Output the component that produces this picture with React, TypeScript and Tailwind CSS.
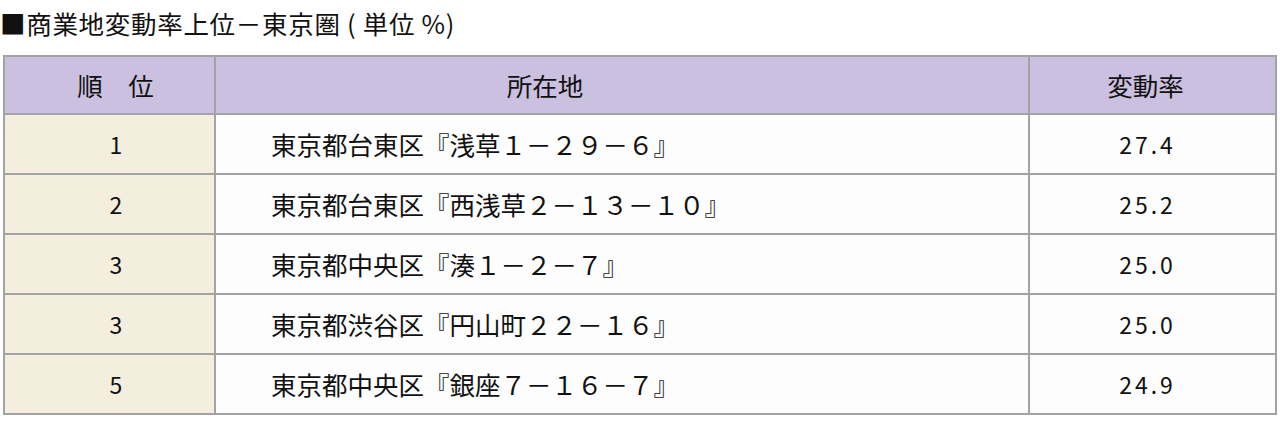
const ROWS = [
  { rank: '1', addr: '東京都台東区『浅草１－２９－６』', rate: '27.4' },
  { rank: '2', addr: '東京都台東区『西浅草２－１３－１０』', rate: '25.2' },
  { rank: '3', addr: '東京都中央区『湊１－２－７』', rate: '25.0' },
  { rank: '3', addr: '東京都渋谷区『円山町２２－１６』', rate: '25.0' },
  { rank: '5', addr: '東京都中央区『銀座７－１６－７』', rate: '24.9' },
];

export default function App() {
  return (
    <div className="w-[1280px] h-[422px] bg-white text-[#111] font-['Noto_Sans_CJK_JP','Noto_Sans',sans-serif]">
      <h1 className="pt-[7px] text-[25.5px] leading-[32px] font-normal tracking-[0.7px]">■商業地変動率上位－東京圏 ( 単位 %)</h1>
      <table className="mt-[16px] ml-[3px] w-[1274px] border-collapse border-2 border-[#a3a3a3] text-[25.5px] table-fixed">
        <colgroup>
          <col className="w-[211px]" />
          <col className="w-[814px]" />
          <col />
        </colgroup>
        <thead>
          <tr className="h-[58px] bg-[#cbc0df]">
            <th className="border-2 border-[#a3a3a3] font-normal text-center pl-[12px]">順　位</th>
            <th className="border-2 border-[#a3a3a3] font-normal text-center pr-[154px]">所在地</th>
            <th className="border-2 border-[#a3a3a3] font-normal text-center pr-[14px]">変動率</th>
          </tr>
        </thead>
        <tbody>
          {ROWS.map((r, i) => (
            <tr key={i} className="h-[60px]">
              <td className="border-2 border-[#a3a3a3] bg-[#f4eedf] text-center pl-[16px] text-[23px] tracking-[3px]">{r.rank}</td>
              <td className="border-2 border-[#a3a3a3] bg-[#fdfdfd] pl-[55px]">{r.addr}</td>
              <td className="border-2 border-[#a3a3a3] bg-[#fdfdfd] text-center pr-[10px] text-[23px] tracking-[3px]">{r.rate}</td>
            </tr>
          ))}
        </tbody>
      </table>
    </div>
  );
}
